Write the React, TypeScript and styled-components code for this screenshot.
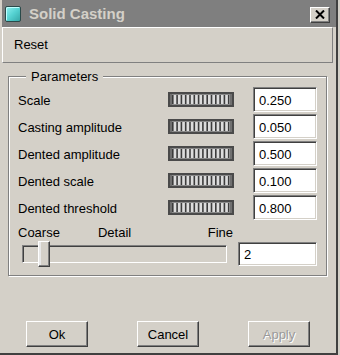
import React from "react";
import styled, { createGlobalStyle } from "styled-components";

const Global = createGlobalStyle`
  html, body { margin: 0; padding: 0; background: #d4d0c8; }
  body { font-family: "Liberation Sans", Arial, sans-serif; font-size: 13px; color: #000; }
  * { box-sizing: border-box; }
`;

const Window = styled.div`
  width: 338px;
  height: 355px;
  background: #d4d0c8;
  border-right: 2px solid #404040;
  border-bottom: 2px solid #404040;
  padding-left: 2px;
  display: flex;
  flex-direction: column;
`;

const TitleBar = styled.div`
  height: 27px;
  background: #7f7f7f;
  display: flex;
  align-items: center;
  padding: 0 6px 0 3px;
  gap: 8px;
`;

const AppIcon = styled.div`
  width: 16px;
  height: 16px;
  border: 1px solid #2a4a4a;
  border-radius: 2px;
  background: linear-gradient(135deg, #8ff0f0 0%, #55d2d2 50%, #36a8a8 100%);
  box-shadow: inset 1px 1px #c0ffff;
`;

const Title = styled.div`
  flex: 1;
  color: #d4d0c8;
  font-weight: bold;
  font-size: 15px;
  font-family: "Liberation Sans", Arial, sans-serif;
`;

const CloseButton = styled.div`
  width: 20px;
  height: 16px;
  background: #d4d0c8;
  border: 1px solid;
  border-color: #fff #404040 #404040 #fff;
  box-shadow: inset -1px -1px #808080;
  display: flex;
  align-items: center;
  justify-content: center;
  margin-top: 2px;
`;

const MenuBar = styled.div`
  height: 36px;
  margin-right: 3px;
  border: 1px solid;
  border-color: #fff #808080 #808080 #fff;
  display: flex;
  align-items: center;
  padding-left: 11px;
  padding-bottom: 2px;
`;

const Group = styled.div`
  position: relative;
  margin: 13px 9px 0 6px;
  height: 200px;
  border: 1px solid #808080;
  box-shadow: inset 1px 1px #fff, 1px 1px #fff;
  padding: 10px 8px 0 9px;
  display: flex;
  flex-direction: column;
`;

const Legend = styled.span`
  position: absolute;
  top: -8px;
  left: 17px;
  padding: 0 5px;
  background: #d4d0c8;
  line-height: 15px;
`;

const Rows = styled.div`
  display: flex;
  flex-direction: column;
  gap: 2px;
`;

const Row = styled.div`
  display: grid;
  grid-template-columns: 150px 85px 64px;
  align-items: center;
  height: 25px;
`;

const Label = styled.span`
  white-space: nowrap;
  line-height: 15px;
  padding-top: 1px;
`;

const TextBox = styled.div<{ $w: number }>`
  width: ${(p) => p.$w}px;
  height: 25px;
  background: #fff;
  border: 1px solid;
  border-color: #808080 #fff #fff #808080;
  box-shadow: inset 1px 1px #404040, inset -1px -1px #d4d0c8;
  display: flex;
  align-items: center;
  padding-left: 5px;
  padding-top: 1px;
`;

const ScaleLabels = styled.div`
  display: flex;
  height: 15px;
  margin-top: 5px;
  width: 215px;
  line-height: 15px;
`;

const ScaleLabel = styled.span<{ $ml?: number; $grow?: boolean }>`
  margin-left: ${(p) => p.$ml ?? 0}px;
  flex: ${(p) => (p.$grow ? 1 : "none")};
  text-align: ${(p) => (p.$grow ? "right" : "left")};
`;

const SliderRow = styled.div`
  display: flex;
  align-items: center;
  margin-top: 1px;
  height: 26px;
`;

const Track = styled.div`
  position: relative;
  margin-left: 4px;
  width: 205px;
  height: 18px;
  border: 1px solid;
  border-color: #808080 #fff #fff #808080;
  box-shadow: inset 1px 1px #404040, inset -1px -1px #d4d0c8;
`;

const Thumb = styled.div`
  position: absolute;
  left: 15px;
  top: -5px;
  width: 12px;
  height: 26px;
  background: #d4d0c8;
  border: 1px solid;
  border-color: #fff #404040 #404040 #fff;
  box-shadow: inset -1px -1px #808080, inset 2px 0 #e8e8e8;
`;

const SliderBox = styled(TextBox)`
  margin-left: 11px;
  height: 24px;
`;

const ButtonRow = styled.div`
  display: flex;
  gap: 49px;
  margin-top: 45px;
  padding-left: 24px;
`;

const Button = styled.div<{ $disabled?: boolean }>`
  width: 62px;
  height: 26px;
  border: 1px solid;
  border-color: #fff #404040 #404040 #fff;
  box-shadow: inset -1px -1px #808080;
  display: flex;
  align-items: center;
  justify-content: center;
  color: ${(p) => (p.$disabled ? "#9a9a9a" : "#000")};
  text-shadow: ${(p) => (p.$disabled ? "1px 1px #fff" : "none")};
  padding-top: 1px;
`;

const Thumbwheel: React.FC = () => {
  const lines = Array.from({ length: 14 }, (_, i) => 4 + i * 4.3);
  return (
    <svg width="66" height="15" viewBox="0 0 66 15">
      <rect x="0" y="0" width="66" height="15" fill="#4a4a4a" />
      <rect x="2" y="2" width="62" height="11" fill="#dcdcdc" />
      <rect x="2" y="2" width="62" height="1" fill="#8a8a8a" />
      <rect x="2" y="12" width="62" height="1" fill="#8a8a8a" />
      <rect x="2" y="2" width="2" height="11" fill="#707070" />
      <rect x="62" y="2" width="2" height="11" fill="#707070" />
      {lines.map((x, i) => (
        <rect key={i} x={x} y="3" width="1.6" height="9" fill="#3c3c3c" />
      ))}
    </svg>
  );
};

const params = [
  ["Scale", "0.250"],
  ["Casting amplitude", "0.050"],
  ["Dented amplitude", "0.500"],
  ["Dented scale", "0.100"],
  ["Dented threshold", "0.800"],
];

export default function App() {
  return (
    <>
      <Global />
      <Window>
        <TitleBar>
          <AppIcon />
          <Title>Solid Casting</Title>
          <CloseButton>
            <svg width="10" height="9" viewBox="0 0 10 9">
              <path d="M1 0.5 L9 8.5 M9 0.5 L1 8.5" stroke="#000" strokeWidth="2" />
            </svg>
          </CloseButton>
        </TitleBar>
        <MenuBar>Reset</MenuBar>
        <Group>
          <Legend>Parameters</Legend>
          <Rows>
            {params.map(([label, value]) => (
              <Row key={label}>
                <Label>{label}</Label>
                <Thumbwheel />
                <TextBox $w={64}>{value}</TextBox>
              </Row>
            ))}
          </Rows>
          <ScaleLabels>
            <ScaleLabel>Coarse</ScaleLabel>
            <ScaleLabel $ml={38}>Detail</ScaleLabel>
            <ScaleLabel $grow>Fine</ScaleLabel>
          </ScaleLabels>
          <SliderRow>
            <Track>
              <Thumb />
            </Track>
            <SliderBox $w={79}>2</SliderBox>
          </SliderRow>
        </Group>
        <ButtonRow>
          <Button>Ok</Button>
          <Button>Cancel</Button>
          <Button $disabled>Apply</Button>
        </ButtonRow>
      </Window>
    </>
  );
}
